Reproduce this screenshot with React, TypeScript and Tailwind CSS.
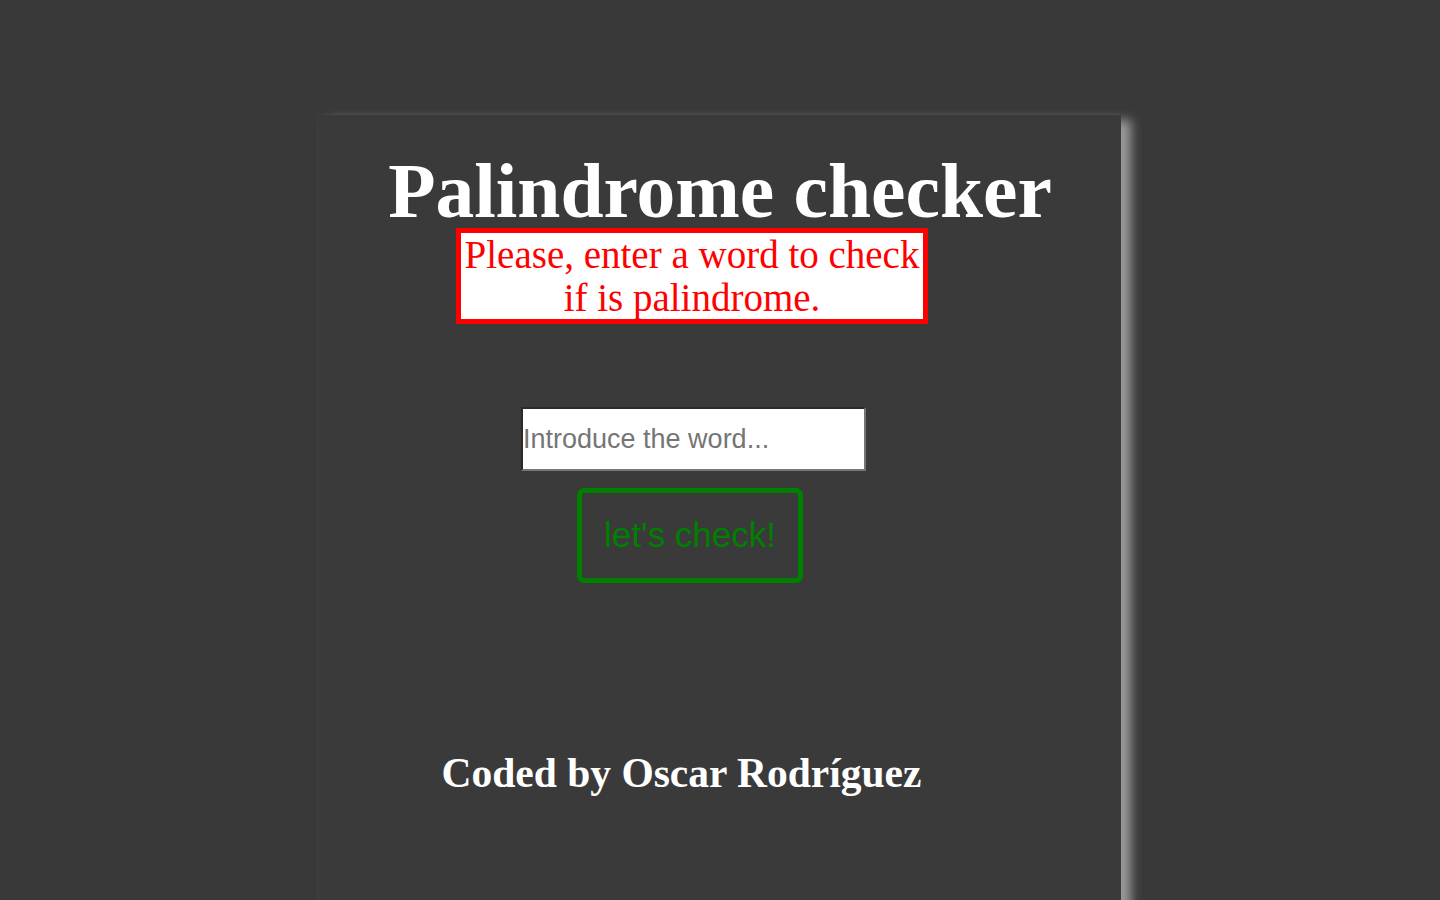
import React from "react";

function App() {
  return (
    <div className="min-h-screen bg-[#393939] overflow-hidden">
      <div className="mx-auto mt-[115px] w-[802px] h-[800px] bg-[#3a3a3a] shadow-[10px_5px_10px_#9a9a9a,-1px_-1px_3px_#404040] flex flex-col items-center pt-[39px]">
        <h1 className="font-['Liberation_Serif',serif] font-bold text-white text-[77.5px] leading-[74px]">
          Palindrome checker
        </h1>

        <div className="mr-[56px] w-[472px] h-[96px] border-[5px] border-[#ff0000] bg-white text-center text-[#ff0000] font-['Liberation_Serif',serif] text-[39px] leading-[43px]">
          Please, enter a word to check if is palindrome.
        </div>

        <input
          type="text"
          placeholder="Introduce the word..."
          className="mt-[83px] mr-[53px] w-[345px] h-[64px] bg-white border-2 border-t-[#2a2a2a] border-l-[#2a2a2a] border-r-[#767676] border-b-[#767676] px-0 font-['Liberation_Sans',Arial,sans-serif] text-[27px] text-black placeholder:text-[#757575] outline-none"
        />

        <button className="mt-[17px] mr-[60px] w-[226px] h-[95px] border-[5px] border-[#008000] rounded-[7px] bg-transparent text-[#008000] font-['Liberation_Sans',Arial,sans-serif] text-[35px]">
          let's check!
        </button>

        <p className="mt-[166px] mr-[77px] font-['Liberation_Serif',serif] font-bold text-white text-[41.5px] leading-[48px]">
          Coded by Oscar Rodríguez
        </p>
      </div>
    </div>
  );
}

export default App;
